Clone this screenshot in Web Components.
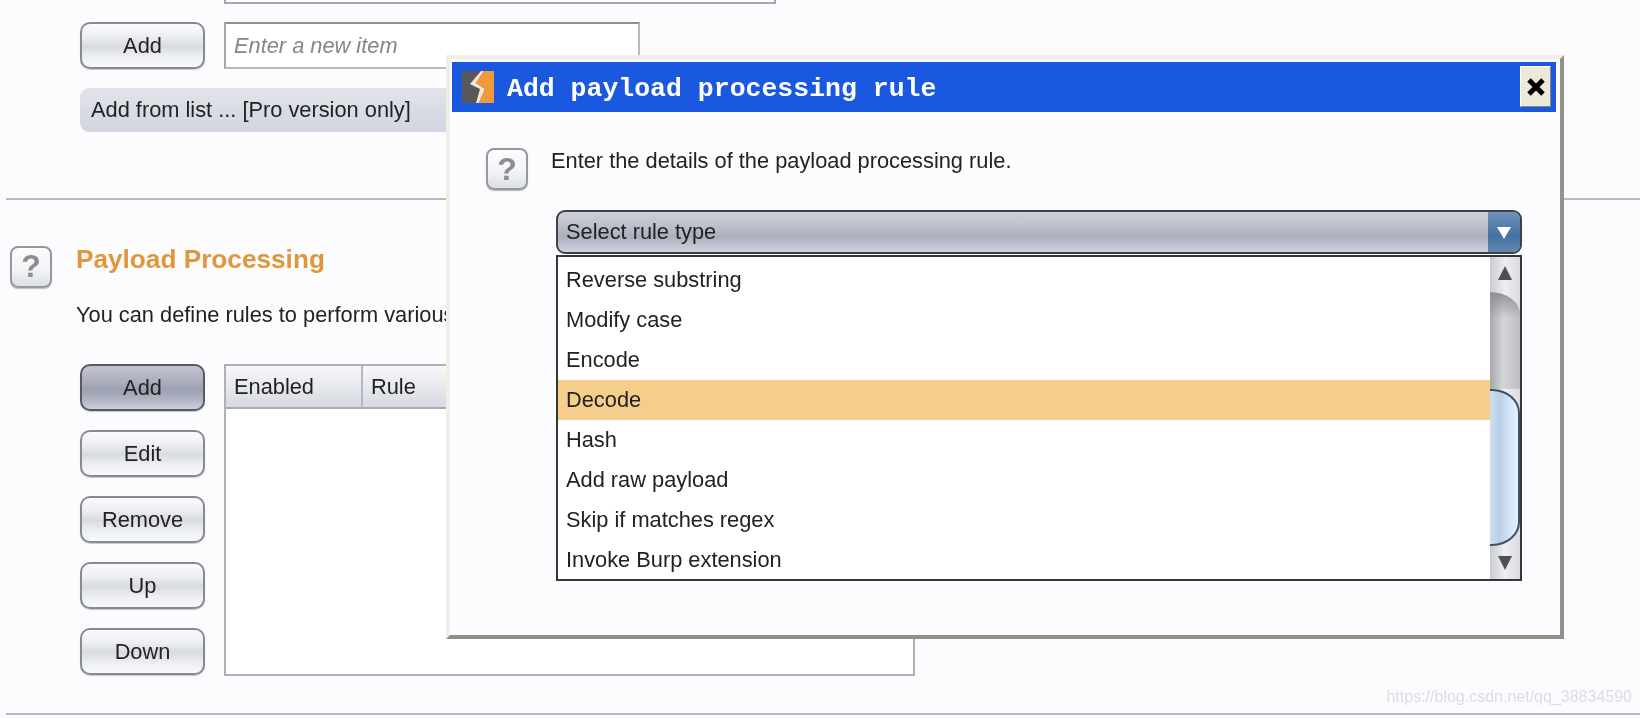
<!DOCTYPE html>
<html>
<head>
<meta charset="utf-8">
<style>
  html, body { margin: 0; height: 100%; background: #fcfcfe; overflow: hidden; }
  body { font-family: "Liberation Sans", Arial, sans-serif; font-size: 21.8px; color: #222; }
</style>
</head>
<body>
<burp-app></burp-app>

<script>
class BurpButton extends HTMLElement {
  connectedCallback() {
    this.attachShadow({ mode: "open" });
    this.shadowRoot.innerHTML = `<style>
      :host { display: flex; align-items: center; justify-content: center; box-sizing: border-box;
        width: 125px; height: 47px; border: 2px solid #868a91; border-radius: 10px; color: #222;
        background: linear-gradient(#fbfbfd 0%, #eeeff3 28%, #d8dbe2 52%, #eceef2 75%, #f8f9fb 100%);
        box-shadow: 0 1px 1px #c6c8ce; }
      :host([active]) { border-color: #565a64;
        background: linear-gradient(#c2c5d0 0%, #afb3c1 30%, #9ca1b2 55%, #b2b6c4 80%, #ccd0da 100%); }
    </style><slot></slot>`;
  }
}

class HelpIcon extends HTMLElement {
  connectedCallback() {
    this.attachShadow({ mode: "open" });
    this.shadowRoot.innerHTML = `<style>
      :host { display: flex; align-items: center; justify-content: center; box-sizing: border-box;
        flex: none; width: 42px; height: 42px; border: 2px solid #94989f; border-radius: 8px;
        background: linear-gradient(#fdfdfe, #f3f4f6 55%, #dcdfe4); box-shadow: 0 1px 1px #bbb;
        font: bold 32px "Liberation Sans", Arial, sans-serif; color: #8c8d90; }
    </style>?`;
  }
}

class EntryPanel extends HTMLElement {
  connectedCallback() {
    this.attachShadow({ mode: "open" });
    this.shadowRoot.innerHTML = `<style>
      :host { display: block; padding-left: 80px; }
      .stub { box-sizing: border-box; width: 552px; height: 4px; margin-left: 144px;
        border: 2px solid #a4a7ad; border-top: 0; }
      .row { display: flex; gap: 19px; margin-top: 18px; }
      .input { box-sizing: border-box; width: 416px; height: 47px; padding: 0 8px; display: flex; align-items: center;
        background: #fff; border: 2px solid #b8babf; border-top-color: #8e9096; border-left-color: #a6a8ad;
        font-style: italic; color: #85868a; }
      .from { box-sizing: border-box; width: 560px; height: 44px; margin-top: 19px; padding: 0 11px;
        display: flex; align-items: center; border-radius: 9px; color: #222;
        background: linear-gradient(#e2e4eb, #d2d5df); }
    </style>
    <div class="stub"></div>
    <div class="row"><burp-button>Add</burp-button><div class="input">Enter a new item</div></div>
    <div class="from">Add from list ... [Pro version only]</div>`;
  }
}

class RuleTable extends HTMLElement {
  connectedCallback() {
    this.attachShadow({ mode: "open" });
    this.shadowRoot.innerHTML = `<style>
      :host { display: block; box-sizing: border-box; width: 691px; height: 312px; background: #fff;
        border: 2px solid #aeb1b8; }
      .head { display: flex; height: 43px; box-sizing: border-box; border-bottom: 2px solid #a9acb4;
        background: linear-gradient(#f7f8fa, #d6d9e1); }
      .head div { display: flex; align-items: center; padding-left: 8px; box-sizing: border-box; }
      .enabled { width: 137px; border-right: 2px solid #b4b7bf; }
    </style>
    <div class="head"><div class="enabled">Enabled</div><div>Rule</div></div>`;
  }
}

class ProcessingPanel extends HTMLElement {
  connectedCallback() {
    this.attachShadow({ mode: "open" });
    this.shadowRoot.innerHTML = `<style>
      :host { display: block; padding-left: 10px; }
      .title { display: flex; align-items: center; gap: 24px; }
      h2 { margin: 0 0 14px; font: bold 26.2px "Liberation Sans", Arial, sans-serif; color: #e0973c; }
      p { margin: 13px 0 0 66px; height: 25px; line-height: 25px; white-space: nowrap; color: #222; }
      .body { display: flex; gap: 19px; margin: 37px 0 0 70px; }
      .buttons { display: flex; flex-direction: column; gap: 19px; }
    </style>
    <div class="title"><help-icon></help-icon><h2>Payload Processing</h2></div>
    <p>You can define rules to perform various</p>
    <div class="body">
      <div class="buttons">
        <burp-button active>Add</burp-button>
        <burp-button>Edit</burp-button>
        <burp-button>Remove</burp-button>
        <burp-button>Up</burp-button>
        <burp-button>Down</burp-button>
      </div>
      <rule-table></rule-table>
    </div>`;
  }
}

class RuleCombo extends HTMLElement {
  connectedCallback() {
    this.attachShadow({ mode: "open" });
    this.shadowRoot.innerHTML = `<style>
      :host { display: flex; box-sizing: border-box; width: 966px; height: 44px; overflow: hidden;
        border: 2px solid #3d4149; border-radius: 9px; color: #222;
        background: linear-gradient(#cdd0d7 0%, #bcc0ca 35%, #aaafbf 62%, #c2c6d2 85%, #d0d3dc 100%); }
      .label { flex: 1; display: flex; align-items: center; padding-left: 8px; }
      .arrow { width: 32px; display: flex; align-items: center; justify-content: center;
        background: linear-gradient(#6f93bb, #4470a2 60%, #6388b0); }
      svg { display: block; }
    </style>
    <div class="label"><slot></slot></div>
    <div class="arrow"><svg width="14" height="13" viewBox="0 0 14 13"><path d="M0 1h14L7 13z" fill="#fff"/></svg></div>`;
  }
}

class RuleScrollbar extends HTMLElement {
  connectedCallback() {
    this.attachShadow({ mode: "open" });
    this.shadowRoot.innerHTML = `<style>
      :host { display: flex; flex-direction: column; flex: none; width: 30px;
        background: linear-gradient(90deg, #c9cbd0, #eceef1 50%, #d9dbe0); }
      .btn { display: flex; justify-content: center; align-items: center; }
      .up { height: 35px; padding-bottom: 3px; box-sizing: border-box; }
      .down { height: 33px; }
      .track { height: 98px; border-top-right-radius: 30px 22px;
        background: linear-gradient(#8f9096, rgba(143,144,150,0) 26px), linear-gradient(90deg, #a6a7ab, #d4d5d9 45%, #bdbec3); }
      .thumb { box-sizing: border-box; height: 159px; border: 2px solid #3d5168; border-left: 0;
        border-radius: 0 28px 28px 0 / 0 24px 24px 0;
        background: linear-gradient(90deg, #cfdff0, #b9cfe6 35%, #d3e5f6 70%, #e6f3fd); }
      svg { display: block; }
    </style>
    <div class="btn up"><svg width="14" height="14" viewBox="0 0 14 14"><path d="M7 0l7 14H0z" fill="#4e5056"/></svg></div>
    <div class="track"></div>
    <div class="thumb"></div>
    <div class="btn down"><svg width="14" height="14" viewBox="0 0 14 14"><path d="M0 0h14L7 14z" fill="#4e5056"/></svg></div>`;
  }
}

class RuleList extends HTMLElement {
  connectedCallback() {
    this.attachShadow({ mode: "open" });
    this.shadowRoot.innerHTML = `<style>
      :host { display: flex; box-sizing: border-box; width: 966px; height: 326px; margin-top: 1px;
        border: 2px solid #33363c; background: #fff; }
      ul { flex: 1; margin: 0; padding: 3px 0 0; list-style: none; }
      li { height: 40px; line-height: 40px; padding-left: 8px; color: #222; white-space: nowrap; }
      li.sel { background: #f6ce8b; }
    </style>
    <ul>
      <li>Reverse substring</li>
      <li>Modify case</li>
      <li>Encode</li>
      <li class="sel">Decode</li>
      <li>Hash</li>
      <li>Add raw payload</li>
      <li>Skip if matches regex</li>
      <li>Invoke Burp extension</li>
    </ul>
    <rule-scrollbar></rule-scrollbar>`;
  }
}

class RuleDialog extends HTMLElement {
  connectedCallback() {
    this.attachShadow({ mode: "open" });
    this.shadowRoot.innerHTML = `<style>
      :host { position: absolute; left: 446px; top: 55px; box-sizing: border-box; width: 1118px; height: 584px;
        padding: 3px 4px 0 2px; background: #fcfcfe;
        border: 4px solid; border-color: #efefe4 #92928a #8f8f86 #efefe4; }
      .bar { display: flex; align-items: center; height: 50px; padding: 0 5px 0 10px; background: #1a58e0; }
      .logo { display: block; flex: none; }
      .name { flex: 1; margin: 3px 0 0 13px; font: bold 26.5px "Liberation Mono", monospace; color: #fff; white-space: nowrap; }
      .close { flex: none; width: 31px; height: 41px; margin-top: -1px; display: flex; align-items: center; justify-content: center;
        box-sizing: border-box; background: #ece9d8; border: 1px solid; border-color: #fff #8a887c #8a887c #fff; }
      .body { padding: 36px 0 0 34px; }
      .intro { display: flex; gap: 23px; height: 62px; }
      .intro span { line-height: 26px; }
      .rule { margin-left: 70px; }
    </style>
    <div class="bar">
      <svg class="logo" width="32" height="32" viewBox="0 0 32 32">
        <rect width="32" height="32" fill="#57585a"/>
        <path d="M19 0L8 13l10 5-4 14h3l6-14-9-6 8-12z" fill="#f7e6cf"/>
        <path d="M22 0h10v32H17l6-14-9-6z" fill="#f09a3c"/>
      </svg>
      <div class="name">Add payload processing rule</div>
      <div class="close"><svg width="20" height="20" viewBox="0 0 20 20"><path d="M3 3l14 14M17 3L3 17" stroke="#000" stroke-width="5"/></svg></div>
    </div>
    <div class="body">
      <div class="intro"><help-icon></help-icon><span>Enter the details of the payload processing rule.</span></div>
      <div class="rule">
        <rule-combo>Select rule type</rule-combo>
        <rule-list></rule-list>
      </div>
    </div>`;
  }
}

class BurpApp extends HTMLElement {
  connectedCallback() {
    this.attachShadow({ mode: "open" });
    this.shadowRoot.innerHTML = `<style>
      :host { display: block; position: relative; height: 718px; overflow: hidden; filter: blur(0.45px); }
      hr { height: 2px; margin: 0 0 0 6px; border: 0; background: #b9bbc2; }
      .first { margin-top: 66px; }
      .second { margin-top: 37px; }
      processing-panel { margin-top: 44px; }
      .mark { position: absolute; right: 8px; top: 688px; font-size: 16px; color: #dcdde2; }
    </style>
    <entry-panel></entry-panel>
    <hr class="first">
    <processing-panel></processing-panel>
    <hr class="second">
    <rule-dialog></rule-dialog>
    <div class="mark">https://blog.csdn.net/qq_38834590</div>`;
  }
}

customElements.define("burp-button", BurpButton);
customElements.define("help-icon", HelpIcon);
customElements.define("entry-panel", EntryPanel);
customElements.define("rule-table", RuleTable);
customElements.define("processing-panel", ProcessingPanel);
customElements.define("rule-combo", RuleCombo);
customElements.define("rule-scrollbar", RuleScrollbar);
customElements.define("rule-list", RuleList);
customElements.define("rule-dialog", RuleDialog);
customElements.define("burp-app", BurpApp);
</script>
</body>
</html>
